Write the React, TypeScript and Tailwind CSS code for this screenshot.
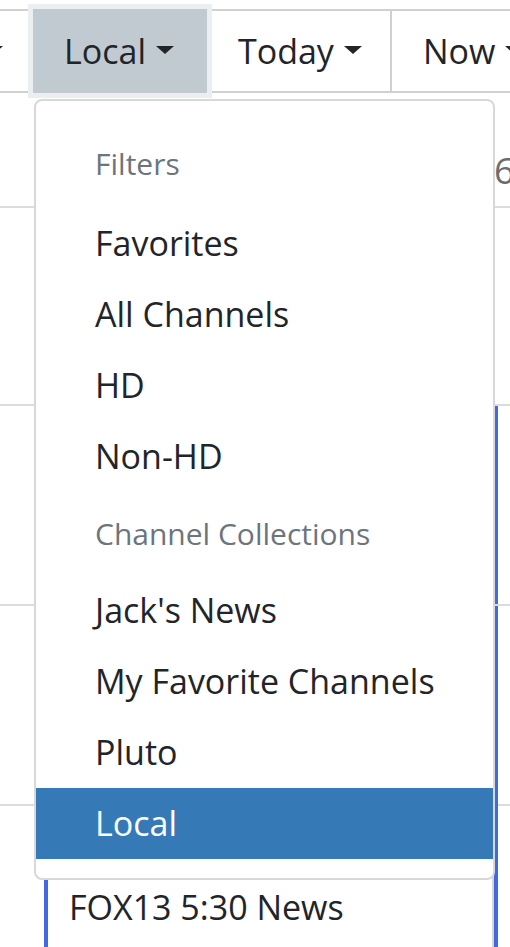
import React from 'react';

type MenuEntry = { label: string; header?: boolean; active?: boolean };

const menu: MenuEntry[] = [
  { label: 'Filters', header: true },
  { label: 'Favorites' },
  { label: 'All Channels' },
  { label: 'HD' },
  { label: 'Non-HD' },
  { label: 'Channel Collections', header: true },
  { label: "Jack's News" },
  { label: 'My Favorite Channels' },
  { label: 'Pluto' },
  { label: 'Local', active: true },
];

const Caret: React.FC = () => (
  <span className="ml-[10px] mb-[3px] inline-block h-0 w-0 shrink-0 border-x-[9px] border-t-[8px] border-x-transparent border-t-[#212529]" />
);

const App: React.FC = () => {
  return (
    <div className="relative h-[947px] w-[510px] overflow-hidden bg-white font-['Open_Sans',sans-serif] text-[#212529]">
      {/* Toolbar */}
      <nav className="mt-[9px] flex h-[84px] text-[34px]">
        <div className="flex w-[33px] shrink-0 items-center justify-end overflow-hidden border-y-2 border-[#d0d0d0] pr-[30px]">
          <span className="shrink-0">Channels</span>
          <Caret />
        </div>
        <div className="relative z-10 flex w-[174px] shrink-0 items-center bg-[#c1c9d1] pl-[31px] ring-[5px] ring-[#eceff1]">
          <span>Local</span>
          <Caret />
        </div>
        <div className="flex w-[183px] shrink-0 items-center border-y-2 border-l-2 border-[#d0d0d0] pl-[29px]">
          <span>Today</span>
          <Caret />
        </div>
        <div className="flex w-[200px] shrink-0 items-center border-y-2 border-l-2 border-[#d0d0d0] pl-[31px]">
          <span>Now</span>
          <Caret />
        </div>
      </nav>

      {/* Guide grid behind the menu */}
      <div className="flex flex-col">
        <div className="h-[115px] border-b-2 border-[#dcdcdc] pl-[494px] pt-[60px] text-[36px] leading-none text-[#6c6c6c]">
          <span className="whitespace-nowrap">6:00 PM</span>
        </div>
        <div className="h-[198px] border-b-2 border-[#dcdcdc]" />
        <div className="flex h-[200px] border-b-2 border-[#dcdcdc]">
          <div className="ml-[494px] w-[200px] shrink-0 border-l-4 border-[#4169e1]" />
        </div>
        <div className="flex h-[200px] border-b-2 border-[#dcdcdc]">
          <div className="ml-[494px] w-[200px] shrink-0 border-l-4 border-[#4169e1]" />
        </div>
        <div className="flex h-[200px]">
          <div className="ml-[44px] mt-[8px] w-[450px] shrink-0 border-l-4 border-r-2 border-l-[#4169e1] border-r-[#d6d6d6] pl-[21px] pt-[68px] text-[34px]">
            <span className="whitespace-nowrap">FOX13 5:30 News</span>
          </div>
          <div className="mt-[-4px] w-[200px] shrink-0 border-l-4 border-[#4169e1]" />
        </div>
      </div>

      {/* Open dropdown */}
      <div className="absolute left-[34px] top-[99px] z-20 w-[461px] rounded-[8px] border-2 border-[#d8d8d8] bg-white pb-[19px] pt-[24px]">
        {menu.map((item, i) =>
          item.header ? (
            <div
              key={item.label}
              className={`flex h-[83px] items-center pl-[59px] text-[30px] text-[#6c757d] ${i === 0 ? 'pb-[6px]' : ''}`}
            >
              {item.label}
            </div>
          ) : (
            <div
              key={item.label}
              className={`flex h-[71px] items-center pl-[59px] text-[34px] ${
                item.active ? 'bg-[#357ab7] text-white' : 'text-[#212529]'
              }`}
            >
              {item.label}
            </div>
          )
        )}
      </div>
    </div>
  );
};

export default App;
